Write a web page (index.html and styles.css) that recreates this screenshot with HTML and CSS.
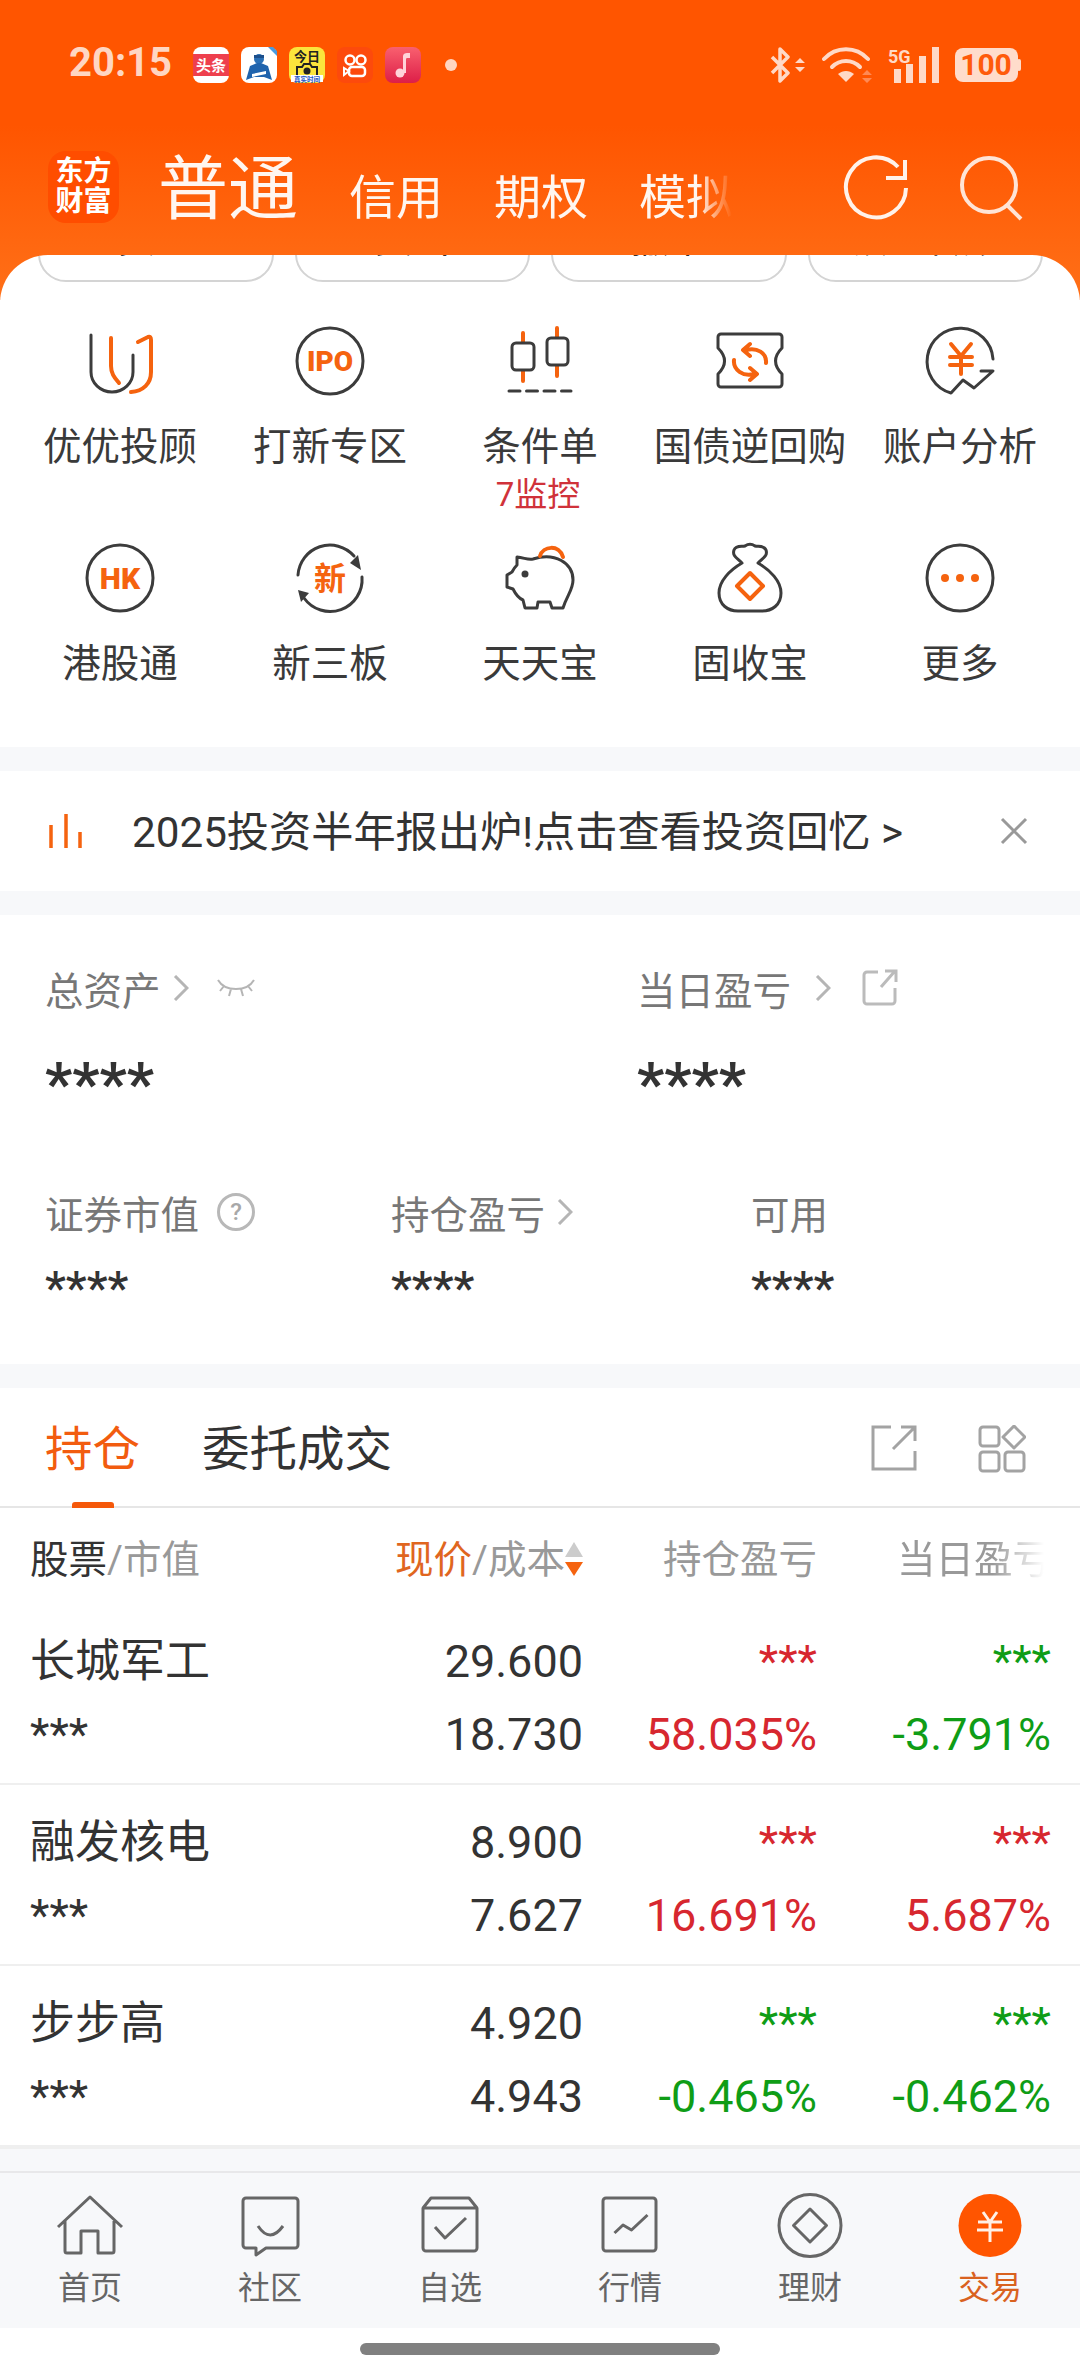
FILE: index.html
```html
<!DOCTYPE html>
<html lang="zh-CN">
<head>
  <meta charset="UTF-8" />
  <meta name="viewport" content="width=device-width, initial-scale=1.0"/>
  <title>交易</title>
  <link rel="stylesheet" href="styles.css">
</head>
<body>

<div class="statusbar">
  <span class="clock">20:15</span>
  <div class="notif-icons">
    <svg viewBox="0 0 36 36"><rect width="36" height="36" rx="8" fill="#fff"/><rect y="7" width="36" height="22" fill="#ee3f4d"/><text x="18" y="24" class="ic-cn" font-size="15" fill="#fff" text-anchor="middle">头条</text></svg>
    <svg viewBox="0 0 36 36"><rect width="36" height="36" rx="8" fill="#fff"/><path d="M27 0h5l4 4v5z" fill="#4a9be0"/><circle cx="18" cy="12" r="5" fill="#2a6fb5"/><path d="M13 8h10v3H13z" fill="#1c4f8c"/><path d="M5 33l4-14 7-3h4l7 3 4 14-8-3H13z" fill="#1f63ad"/><path d="M11 27l14-3v3l-14 3z" fill="#fff"/></svg>
    <svg viewBox="0 0 36 36"><rect width="36" height="36" rx="8" fill="#fbe43c"/><text x="18" y="14" class="ic-cn" font-size="13" fill="#222" text-anchor="middle">今日</text><path d="M8 28v-8h5l2-3h6l2 3h5v8" fill="none" stroke="#222" stroke-width="2"/><circle cx="18" cy="24" r="3.500" fill="#222"/><rect x="2" y="28" width="32" height="7" fill="#fff"/><text x="18" y="34.500" class="ic-cn" font-size="6.500" fill="#1d55c4" text-anchor="middle">真实时间</text></svg>
    <svg viewBox="0 0 36 36"><rect width="36" height="36" rx="8" fill="#fd4a0c"/><circle cx="13" cy="13" r="4.500" fill="none" stroke="#fff" stroke-width="2.500"/><circle cx="24" cy="13" r="4.500" fill="none" stroke="#fff" stroke-width="2.500"/><rect x="12" y="20" width="16" height="9" rx="3" fill="none" stroke="#fff" stroke-width="2.500"/><path d="M12 24l-5-3v7z" fill="none" stroke="#fff" stroke-width="2"/></svg>
    <svg viewBox="0 0 36 36"><defs><linearGradient id="musicbg" x1="0" y1="0" x2="0" y2="1"><stop offset="0" stop-color="#f9606f"/><stop offset="1" stop-color="#dd1e48"/></linearGradient></defs><rect width="36" height="36" rx="8" fill="url(#musicbg)"/><circle cx="15" cy="26" r="4.500" fill="#ffd3d9"/><path d="M18 26V9c0-2 2-3 4-3h3v5h-3c-1 0-1 1-1 2v13z" fill="#ffd3d9"/></svg>
    <i class="notif-dot"></i>
  </div>
  <div class="sys-icons">
    <svg class="ic-bt" viewBox="0 0 36 36"><path d="M2 10l16 16-8 8V2l8 8L2 26" fill="none" stroke="#ffd9c7" stroke-width="3.500" stroke-linejoin="round"/><path d="M25 16h10l-5-5zM25 20h10l-5 5z" fill="#ffd9c7"/></svg>
    <svg class="ic-wifi" viewBox="0 0 52 36"><g fill="none" stroke="#ffd9c7" stroke-width="4" stroke-linecap="round"><path d="M2 12C14-1 34-1 46 12"/><path d="M10 20c8-8 20-8 28 0"/></g><path d="M24 35l-8-8c5-4 11-4 16 0z" fill="#ffd9c7"/><path d="M40 28h10l-5-5zM40 31h10l-5 5z" fill="#ff8a55"/></svg>
    <svg class="ic-signal" viewBox="0 0 52 36"><text x="0" y="16" class="ic-5g">5G</text><g fill="#ffd9c7"><rect x="6" y="22" width="7" height="14"/><rect x="18" y="17" width="7" height="19"/><rect x="31" y="9" width="7" height="27"/><rect x="44" y="0" width="7" height="36"/></g></svg>
    <svg class="ic-batt" viewBox="0 0 66 34"><rect width="63" height="34" rx="8" fill="#ffdccb"/><rect x="62" y="11" width="4" height="12" rx="2" fill="#ffdccb"/><text x="31" y="27" class="ic-batt-num" text-anchor="middle">100</text></svg>
  </div>
</div>

<div class="topbar">
  <div class="logo"><span>东方</span><span>财富</span></div>
  <div class="acct-tabs">
    <span class="acct-main">普通</span>
    <span>信用</span>
    <span>期权</span>
    <span>模拟</span>
  </div>
  <div class="top-actions">
    <svg viewBox="0 0 70 70"><path d="M64 35A30 30 0 1 1 56 14" fill="none" stroke="#fff2ea" stroke-width="4"/><path d="M63 7V25H44" fill="none" stroke="#fff2ea" stroke-width="4"/></svg>
    <svg viewBox="0 0 70 70"><circle cx="32" cy="32" r="27" fill="none" stroke="#ffe4d6" stroke-width="4"/><path d="M50 52L64 66" stroke="#ffe4d6" stroke-width="4"/></svg>
  </div>
</div>

<div class="sheet">
  <div class="pills">
    <div class="pill">买入</div>
    <div class="pill">卖出</div>
    <div class="pill">撤单</div>
    <div class="pill">银证转账</div>
  </div>

  <div class="tiles">
    <div class="tile">
      <svg class="tile-ic" viewBox="0 0 70 70"><path class="ln" d="M6 9V46a21 20 0 0 0 42 0V29"/><path class="or" d="M26 12V40C26 48 30 52 34 57"/><path class="or" d="M53 16L63 11Q66 10 66 14V46C66 58 58 65 46 66"/></svg>
      <div class="tile-name">优优投顾</div>
    </div>
    <div class="tile">
      <svg class="tile-ic" viewBox="0 0 70 70"><circle class="ln" cx="35" cy="35" r="33"/><text x="35" y="45" class="ic-txt" font-size="28" text-anchor="middle">IPO</text></svg>
      <div class="tile-name">打新专区</div>
    </div>
    <div class="tile">
      <svg class="tile-ic" viewBox="0 0 70 70"><path class="or" d="M18 7V55M52 2V50"/><rect class="ln wf" x="7" y="17" width="22" height="27" rx="4"/><rect class="ln wf" x="42" y="12" width="21" height="27" rx="4"/><path class="ln" d="M4 65H66" stroke-dasharray="11 6.500"/></svg>
      <div class="tile-name">条件单</div>
      <div class="tile-sub">7监控</div>
    </div>
    <div class="tile">
      <svg class="tile-ic" viewBox="0 0 70 70"><path class="ln" d="M6 8H64a3 3 0 0 1 3 3V22Q54 35 67 48V58a3 3 0 0 1-3 3H6a3 3 0 0 1-3-3V48Q16 35 3 22V11a3 3 0 0 1 3-3Z"/><path class="or" d="M31 24C42 21 52 27 51 37M19 34C18 44 28 51 39 48M35 18L28 24L35 30M35 42L42 48L35 54"/></svg>
      <div class="tile-name">国债逆回购</div>
    </div>
    <div class="tile">
      <svg class="tile-ic" viewBox="0 0 70 70"><path class="ln" d="M68 33A33 33 0 1 0 26 67L38 54L49 62L68 45H56"/><path class="or" d="M26 18L36 30L46 18M25 31H47M25 39H47M36 30V48"/></svg>
      <div class="tile-name">账户分析</div>
    </div>

    <div class="tile">
      <svg class="tile-ic" viewBox="0 0 70 70"><circle class="ln" cx="35" cy="35" r="33"/><text x="35" y="46" class="ic-txt" font-size="30" text-anchor="middle">HK</text></svg>
      <div class="tile-name">港股通</div>
    </div>
    <div class="tile">
      <svg class="tile-ic" viewBox="0 0 70 70"><path class="ln" d="M3 32A32 32 0 0 1 59 13M67 34A32 32 0 0 1 9 55"/><path d="M66 27L55 20L63 12ZM3 47L14 50L6 59Z" fill="#3c3c3c"/><text x="35" y="47" class="ic-cn-or" font-size="32" text-anchor="middle">新</text></svg>
      <div class="tile-name">新三板</div>
    </div>
    <div class="tile">
      <svg class="tile-ic" viewBox="0 0 70 70"><path class="ln" d="M12 14C20 15 23 17 28 16C50 9 68 20 68 37C68 47 62 52 58 65H47L45 59H33L32 65H20L18 57C13 55 10 50 8 46L2 44V32L7 29C9 25 10 24 12 22Z"/><circle cx="20" cy="31" r="3.500" fill="#3c3c3c"/><path class="or" d="M35 13C38 3 54 1 58 14"/></svg>
      <div class="tile-name">天天宝</div>
    </div>
    <div class="tile">
      <svg class="tile-ic" viewBox="0 0 70 70"><path class="ln" d="M27 20C22 15 17 13 19 7C21 2 27 4 30 3C33 1 37 1 40 3C43 4 49 2 51 7C53 13 48 15 43 20C55 27 66 38 66 50C66 62 57 68 47 68H23C13 68 4 62 4 50C4 38 15 27 27 20Z"/><path class="or" d="M35 30L48 43L35 56L22 43Z"/></svg>
      <div class="tile-name">固收宝</div>
    </div>
    <div class="tile">
      <svg class="tile-ic" viewBox="0 0 70 70"><circle class="ln" cx="35" cy="35" r="33"/><circle cx="20" cy="35" r="4" fill="#f5630f"/><circle cx="35" cy="35" r="4" fill="#f5630f"/><circle cx="50" cy="35" r="4" fill="#f5630f"/></svg>
      <div class="tile-name">更多</div>
    </div>
  </div>

  <div class="band"></div>

  <div class="notice">
    <svg class="notice-ic" viewBox="0 0 34 34"><path d="M2 34V11M17 34V0M31 34V18" stroke="#f5630f" stroke-width="3.500" fill="none"/></svg>
    <span class="notice-text">2025投资半年报出炉!点击查看投资回忆 &gt;</span>
    <svg class="notice-close" viewBox="0 0 28 28"><path d="M2 2L26 26M26 2L2 26" stroke="#999" stroke-width="3" fill="none"/></svg>
  </div>

  <div class="band"></div>

  <div class="assets">
    <div class="assets-top">
      <div class="asset-big">
        <div class="asset-label">总资产
          <svg class="chev" viewBox="0 0 16 26"><path d="M2 1L14 13L2 25" /></svg>
          <svg class="eye" viewBox="0 0 38 18"><path d="M1 1C8 13 30 13 37 1M7 7L3 12M14 10L12 17M24 10L26 17M31 7L35 12" fill="none" stroke="#b5b5b5" stroke-width="2"/></svg>
        </div>
        <div class="stars-big">****</div>
      </div>
      <div class="asset-big">
        <div class="asset-label">当日盈亏
          <svg class="chev chev-far" viewBox="0 0 16 26"><path d="M2 1L14 13L2 25" /></svg>
          <svg class="share" viewBox="0 0 36 38"><path d="M16 3H5a3 3 0 0 0-3 3V32a3 3 0 0 0 3 3H30a3 3 0 0 0 3-3V19M19 18L33 2M23 2H34V13" fill="none" stroke="#bbb" stroke-width="3"/></svg>
        </div>
        <div class="stars-big">****</div>
      </div>
    </div>
    <div class="assets-sub">
      <div>
        <div class="asset-label">证券市值
          <svg class="help" viewBox="0 0 38 38"><circle cx="19" cy="19" r="17.500" fill="none" stroke="#b8b8b8" stroke-width="3"/><text x="19" y="27" class="help-q" text-anchor="middle">?</text></svg>
        </div>
        <div class="stars-sm">****</div>
      </div>
      <div>
        <div class="asset-label">持仓盈亏
          <svg class="chev" viewBox="0 0 16 26"><path d="M2 1L14 13L2 25" /></svg>
        </div>
        <div class="stars-sm">****</div>
      </div>
      <div>
        <div class="asset-label">可用</div>
        <div class="stars-sm">****</div>
      </div>
    </div>
  </div>

  <div class="band"></div>

  <div class="pos-tabs">
    <div class="pos-tab active">持仓</div>
    <div class="pos-tab">委托成交</div>
    <svg class="pos-share" viewBox="0 0 46 46"><path d="M20 2H2V44H44V26M22 24L44 2M30 2H44V16" fill="none" stroke="#a3a3a3" stroke-width="3"/></svg>
    <svg class="pos-grid" viewBox="0 0 48 48"><g fill="none" stroke="#a3a3a3" stroke-width="3"><rect x="2" y="2" width="19" height="19" rx="3"/><rect x="2" y="27" width="19" height="19" rx="3"/><rect x="27" y="27" width="19" height="19" rx="3"/><path d="M36 1L47 12L36 23L25 12Z" stroke-linejoin="round"/></g></svg>
  </div>

  <div class="grid-row table-head">
    <div><span class="dark">股票</span>/市值</div>
    <div class="num sort-cell"><span><span class="hot">现价</span>/成本</span>
      <svg class="sort" viewBox="0 0 18 34"><path d="M9 0L18 15H0Z" fill="#ccc"/><path d="M0 20H18L9 34Z" fill="#f5630f"/></svg>
    </div>
    <div class="num">持仓盈亏</div>
    <div class="num fade">当日盈亏</div>
  </div>

  <div class="grid-row stock">
    <div class="stock-name"><div>长城军工</div><div class="stars">***</div></div>
    <div class="num"><div>29.600</div><div>18.730</div></div>
    <div class="num up"><div class="stars">***</div><div>58.035%</div></div>
    <div class="num down"><div class="stars">***</div><div>-3.791%</div></div>
  </div>
  <div class="grid-row stock">
    <div class="stock-name"><div>融发核电</div><div class="stars">***</div></div>
    <div class="num"><div>8.900</div><div>7.627</div></div>
    <div class="num up"><div class="stars">***</div><div>16.691%</div></div>
    <div class="num up"><div class="stars">***</div><div>5.687%</div></div>
  </div>
  <div class="grid-row stock">
    <div class="stock-name"><div>步步高</div><div class="stars">***</div></div>
    <div class="num"><div>4.920</div><div>4.943</div></div>
    <div class="num down"><div class="stars">***</div><div>-0.465%</div></div>
    <div class="num down"><div class="stars">***</div><div>-0.462%</div></div>
  </div>

  <div class="band band-last"></div>
</div>

<nav class="tabbar">
  <div class="tabbar-item">
    <svg viewBox="0 0 70 70"><path d="M3 36L35 6L67 36M10 30V60a2 2 0 0 0 2 2H26V40H43V62H57a2 2 0 0 0 2-2V30"/></svg>
    <span>首页</span>
  </div>
  <div class="tabbar-item">
    <svg viewBox="0 0 70 70"><path d="M11 7H60a3 3 0 0 1 3 3V54a3 3 0 0 1-3 3H31L21 64V57H11a3 3 0 0 1-3-3V10a3 3 0 0 1 3-3Z"/><path d="M23 35Q35 53 48 35"/></svg>
    <span>社区</span>
  </div>
  <div class="tabbar-item">
    <svg viewBox="0 0 70 70"><path d="M8 17H62V57a3 3 0 0 1-3 3H11a3 3 0 0 1-3-3ZM8 17L16 7H54L62 17M20 36L30 47L51 27"/></svg>
    <span>自选</span>
  </div>
  <div class="tabbar-item">
    <svg viewBox="0 0 70 70"><rect x="8" y="7" width="53" height="53" rx="3"/><path d="M19.500 42L28 34L36.500 39L52.500 24"/></svg>
    <span>行情</span>
  </div>
  <div class="tabbar-item">
    <svg viewBox="0 0 70 70"><circle cx="35" cy="34.500" r="31"/><path d="M35 18L51.500 34.500L35 51L18.500 34.500Z"/></svg>
    <span>理财</span>
  </div>
  <div class="tabbar-item active">
    <svg viewBox="0 0 70 70"><circle class="trade-bg" cx="35" cy="34.500" r="31.500"/><path class="trade-yen" d="M28 21L35 31L42 21M23 31H47M22 39H48M35 31V51"/></svg>
    <span>交易</span>
  </div>
</nav>

<div class="gesture"><i></i></div>

</body>
</html>
```

FILE: styles.css
```css
body {
  margin: 0;
  width: 1080px;
  height: 2376px;
  overflow: hidden;
  font-family: Roboto, "Noto Sans CJK SC", sans-serif;
  color: #333;
  background: #fff linear-gradient(#ff5500 0, #ff5500 125px, #ff7018 300px) no-repeat;
  background-size: 100% 300px;
}

svg {
  display: block;
  flex: none;
}

/* status bar */
.statusbar {
  height: 130px;
  display: flex;
  align-items: center;
  padding: 0 59px 0 69px;
}

.clock {
  font-size: 40px;
  font-weight: 700;
  line-height: 46px;
  margin-top: -4px;
  color: #ffd6c2;
  width: 124px;
}

.notif-icons {
  display: flex;
  align-items: center;
  gap: 12px;
}

.notif-icons svg {
  width: 36px;
  height: 36px;
}

.notif-dot {
  width: 12px;
  height: 12px;
  border-radius: 50%;
  background: #ffd6c2;
  margin-left: 12px;
}

.ic-cn {
  font-family: "Noto Sans CJK SC", sans-serif;
  font-weight: 700;
}

.sys-icons {
  margin-left: auto;
  display: flex;
  align-items: center;
}

.ic-bt { width: 36px; height: 36px; }
.ic-wifi { width: 52px; height: 36px; margin-left: 16px; }
.ic-signal { width: 52px; height: 36px; margin-left: 14px; }
.ic-batt { width: 66px; height: 34px; margin-left: 15px; }

.ic-5g {
  font-family: Roboto, sans-serif;
  font-size: 18px;
  font-weight: 700;
  fill: #ffd9c7;
}

.ic-batt-num {
  font-family: Roboto, sans-serif;
  font-size: 30px;
  font-weight: 700;
  fill: #ff5a0a;
}

/* top bar */
.topbar {
  height: 125px;
  display: flex;
  align-items: flex-start;
  padding: 0 53px 0 48px;
}

.logo {
  margin-top: 21px;
  width: 71px;
  height: 72px;
  border-radius: 18px;
  background: #ff4d00;
  color: #fff;
  font-size: 28px;
  font-weight: 700;
  line-height: 30px;
  display: flex;
  flex-direction: column;
  align-items: center;
  justify-content: center;
}

.acct-tabs {
  margin: 20px 0 0 39px;
  width: 574px;
  flex: none;
  display: flex;
  align-items: baseline;
  gap: 51px;
  font-size: 47px;
  line-height: 80px;
  white-space: nowrap;
  overflow: hidden;
  color: #fff6f0;
  mask-image: linear-gradient(to right, #000 540px, transparent 574px);
}

.acct-tabs span {
  flex: none;
}

.acct-main {
  font-size: 70px;
}

.top-actions {
  margin: 23px 0 0 auto;
  display: flex;
  gap: 45px;
}

.top-actions svg {
  width: 70px;
  height: 70px;
}

/* sheet */
.sheet {
  background: #fff;
  border-radius: 48px 48px 0 0;
  overflow: hidden;
}

.pills {
  height: 27px;
  display: flex;
  align-items: flex-end;
  gap: 21px;
  padding: 0 37px 0 38px;
}

.pill {
  flex: 1;
  height: 76px;
  box-sizing: border-box;
  border: 2px solid #d4d4d4;
  border-radius: 28px;
  padding-bottom: 22px;
  font-size: 38px;
  line-height: 38px;
  display: flex;
  align-items: flex-end;
  justify-content: center;
}

.tiles {
  height: 421px;
  padding: 44px 15px 0;
  box-sizing: content-box;
  display: grid;
  grid-template-columns: repeat(5, 210px);
  grid-template-rows: 217px 1fr;
}

.tile {
  display: flex;
  flex-direction: column;
  align-items: center;
}

.tile-ic {
  width: 70px;
  height: 70px;
  overflow: visible;
}

.ln, .or {
  fill: none;
  stroke-width: 3px;
  stroke-linejoin: round;
  stroke-linecap: round;
}

.ln { stroke: #3c3c3c; }
.or { stroke: #f5630f; stroke-width: 4px; }
.wf { fill: #fff; }

.ic-txt {
  font-family: Roboto, sans-serif;
  font-weight: 900;
  fill: #f5630f;
}

.ic-cn-or {
  font-family: "Noto Sans CJK SC", sans-serif;
  font-weight: 700;
  fill: #f5630f;
}

.tile-name {
  margin-top: 26px;
  font-size: 38.500px;
  line-height: 50px;
  color: #3a3a3a;
}

.tile-sub {
  margin: 5px 4px 0 0;
  font-size: 33px;
  line-height: 36px;
  color: #d0323a;
}

.band {
  height: 24px;
  background: #f7f8fa;
}

/* notice */
.notice {
  height: 120px;
  box-sizing: border-box;
  display: flex;
  align-items: center;
  padding: 0 52px 0 49px;
}

.notice-ic {
  width: 34px;
  height: 34px;
}

.notice-text {
  margin: -6px 0 0 49px;
  font-size: 42.200px;
  color: #333;
}

.notice-close {
  margin-left: auto;
  width: 28px;
  height: 28px;
}

/* assets */
.assets {
  height: 449px;
  padding: 48px 0 0 45px;
  box-sizing: border-box;
}

.assets-top {
  display: flex;
}

.asset-big {
  flex: none;
  width: 592px;
}

.asset-label {
  display: flex;
  align-items: center;
  height: 50px;
  font-size: 38.500px;
  color: #777;
}

.chev {
  width: 16px;
  height: 26px;
  margin-left: 12px;
}

.chev path {
  fill: none;
  stroke: #b5b5b5;
  stroke-width: 3px;
}

.chev-far {
  margin-left: 24px;
}

.eye {
  width: 38px;
  height: 18px;
  margin-left: 28px;
}

.share {
  width: 36px;
  height: 38px;
  margin-left: 31px;
}

.help {
  width: 38px;
  height: 38px;
  margin-left: 18px;
}

.help-q {
  font-family: Roboto, sans-serif;
  font-size: 24px;
  font-weight: 500;
  fill: #a8a8a8;
}

.stars-big {
  margin-top: 36px;
  font-size: 60px;
  line-height: 70px;
  font-weight: 700;
  color: #333;
}

.assets-sub {
  margin-top: 68px;
  display: flex;
}

.assets-sub > div:nth-child(1) { width: 346px; }
.assets-sub > div:nth-child(2) { width: 360px; }

.stars-sm {
  margin-top: 21px;
  font-size: 47px;
  line-height: 60px;
  font-weight: 500;
  color: #333;
}

/* positions */
.pos-tabs {
  height: 120px;
  box-sizing: border-box;
  border-bottom: 2px solid #e6e6e6;
  display: flex;
  align-items: flex-start;
  padding: 0 54px 0 45px;
}

.pos-tab {
  position: relative;
  margin-top: 29px;
  margin-right: 62px;
  font-size: 47.500px;
  line-height: 66px;
  color: #333;
}

.pos-tab.active {
  color: #f25c0f;
}

.pos-tab.active::after {
  content: "";
  position: absolute;
  left: 27px;
  bottom: -25px;
  width: 42px;
  height: 6px;
  border-radius: 3px 3px 0 0;
  background: #f5580a;
}

.pos-share {
  margin: 37px 0 0 auto;
  width: 46px;
  height: 46px;
}

.pos-grid {
  margin: 37px 0 0 61px;
  width: 48px;
  height: 48px;
}

.grid-row {
  display: grid;
  grid-template-columns: 302px 251px 234px 234px;
  padding: 0 29px 0 30px;
}

.num {
  text-align: right;
}

.table-head {
  height: 96px;
  padding-top: 30px;
  box-sizing: border-box;
  font-size: 38.500px;
  line-height: 44px;
  color: #999;
}

.dark { color: #333; }
.hot { color: #e0661f; }

.sort-cell {
  display: flex;
  justify-content: flex-end;
  align-items: flex-start;
}

.sort {
  width: 18px;
  height: 34px;
  margin-top: 4px;
}

.fade {
  mask-image: linear-gradient(to right, #000 75%, transparent 97%);
}

.stock {
  height: 181px;
  padding-top: 21px;
  box-sizing: border-box;
  border-bottom: 2px solid #efefef;
  font-size: 45px;
  line-height: 73px;
}

.stock:last-of-type {
  border-bottom: none;
}

.stock-name {
  color: #333;
}

.up { color: #d7272f; }
.down { color: #0f9d16; }

.band-last {
  height: 24px;
  border-top: 2px solid #efefef;
  box-sizing: border-box;
}

/* bottom nav */
.tabbar {
  height: 157px;
  box-sizing: border-box;
  border-top: 2px solid #e8e8ea;
  background: #f7f8fa;
  padding-top: 18px;
  display: grid;
  grid-template-columns: repeat(6, 180px);
}

.tabbar-item {
  display: flex;
  flex-direction: column;
  align-items: center;
  font-size: 32px;
  line-height: 40px;
  color: #666;
}

.tabbar-item svg {
  width: 70px;
  height: 70px;
  margin-bottom: 7px;
  fill: none;
  stroke: #666;
  stroke-width: 3px;
  stroke-linejoin: round;
}

.tabbar-item.active {
  color: #d9621f;
}

.trade-bg {
  fill: #ff5500;
  stroke: none;
}

.trade-yen {
  stroke: #fff0e6;
  stroke-width: 3px;
}

.gesture {
  padding-top: 15px;
  display: flex;
  justify-content: center;
}

.gesture i {
  width: 360px;
  height: 12px;
  border-radius: 6px;
  background: #808080;
}
```
